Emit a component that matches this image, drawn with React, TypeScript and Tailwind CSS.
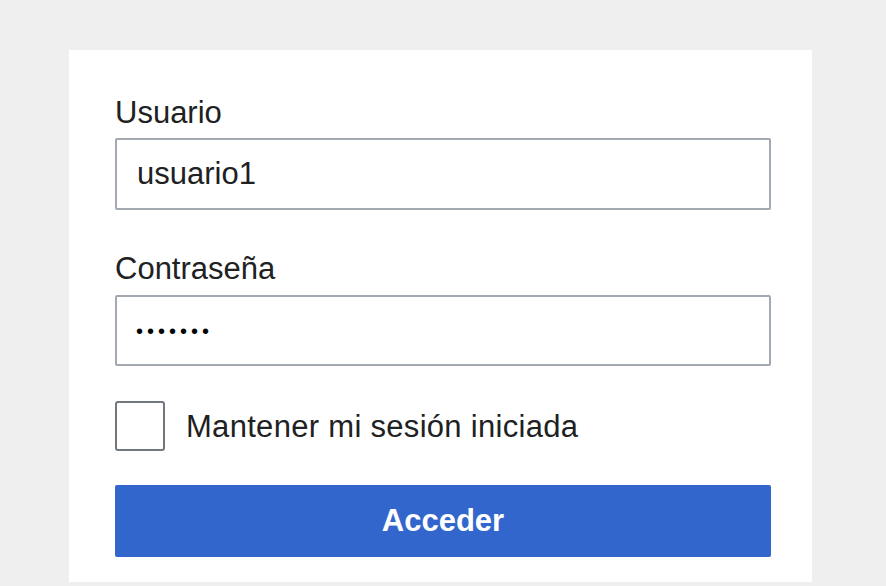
export default function App() {
  const font = { fontFamily: '"Liberation Sans", Arial, sans-serif' }
  return (
    <div className="w-[886px] h-[586px] bg-[#efefef] overflow-hidden pt-[50px] pl-[69px]" style={font}>
      <div className="w-[743px] h-[532px] bg-white pt-[46px] pl-[46px] pr-[41px] text-[#202122]">
        <label className="block text-[31px] leading-[34px] mb-[8px]">Usuario</label>
        <div className="h-[72px] border-2 border-[#a2a9b1] rounded-[2px] flex items-center pl-[20px] text-[31px] leading-[34px]">
          usuario1
        </div>

        <label className="block text-[31px] leading-[34px] mt-[42px] mb-[9px]">Contraseña</label>
        <div className="h-[71px] border-2 border-[#a2a9b1] rounded-[2px] flex items-center pl-[19px] text-[20px] leading-[34px] tracking-[4px] text-black">
          •••••••
        </div>

        <div className="flex items-center mt-[35px] gap-[21px]">
          <div className="w-[50px] h-[50px] border-2 border-[#72777d] rounded-[3px] bg-white" />
          <span className="text-[31px] leading-[34px] mt-[2px] tracking-[0.3px]">Mantener mi sesión iniciada</span>
        </div>

        <button className="mt-[34px] w-full h-[72px] bg-[#3366cc] rounded-[2px] text-white font-bold text-[31px] leading-[34px]">
          Acceder
        </button>
      </div>
    </div>
  )
}
